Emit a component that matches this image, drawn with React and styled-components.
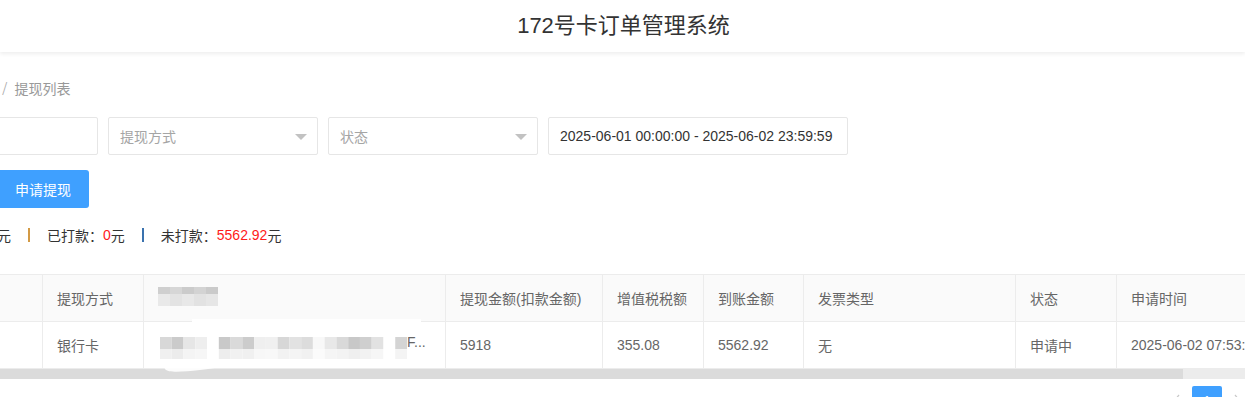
import React from "react";
import styled, { createGlobalStyle } from "styled-components";

const GlobalStyle = createGlobalStyle`
  html, body { margin: 0; padding: 0; background: #fff; overflow: hidden; }
  body {
    font-family: "Liberation Sans", "Noto Sans CJK SC", sans-serif;
    font-size: 14px;
    color: #333;
  }
  * { box-sizing: border-box; }
`;

const Page = styled.div`
  width: 1245px;
  height: 397px;
  overflow: hidden;
  position: relative;
`;

const Header = styled.header`
  height: 52px;
  display: flex;
  align-items: center;
  justify-content: center;
  background: #fff;
  box-shadow: 0 2px 4px rgba(0, 0, 0, 0.07);
  position: relative;
  z-index: 2;
`;

const Title = styled.h1`
  margin: 0;
  font-size: 22px;
  font-weight: normal;
  color: #333;
  line-height: 30px;
  padding-left: 2px;
`;

const Content = styled.main`
  padding-top: 27px;
`;

const Breadcrumb = styled.div`
  display: flex;
  align-items: center;
  height: 20px;
  line-height: 20px;
  margin-left: 2px;
  color: #999;
  font-size: 14px;
`;

const Slash = styled.span`
  margin-right: 7px;
  color: #aaa;
  font-size: 16px;
  font-family: "DejaVu Sans", sans-serif;
  font-weight: 300;
`;

const FilterRow = styled.div`
  display: flex;
  gap: 10px;
  margin-top: 18px;
`;

const Field = styled.div`
  width: ${(p) => p.$w || 210}px;
  height: 38px;
  border: 1px solid #e6e6e6;
  border-radius: 2px;
  display: flex;
  align-items: center;
  justify-content: space-between;
  padding: 0 10px 0 11px;
  font-size: 14px;
  color: ${(p) => (p.$filled ? "#333" : "#a5a5a5")};
  background: #fff;
  margin-left: ${(p) => p.$ml || 0}px;
  flex-shrink: 0;
`;

const Caret = styled.span`
  width: 0;
  height: 0;
  border-left: 6px solid transparent;
  border-right: 6px solid transparent;
  border-top: 6px solid #c2c2c2;
  margin-top: 2px;
`;

const ButtonRow = styled.div`
  display: flex;
  margin-top: 15px;
`;

const PrimaryButton = styled.button`
  height: 38px;
  margin-left: -3px;
  padding: 0 18px;
  border: none;
  border-radius: 3px;
  background: #3fa0ff;
  color: #fff;
  font-family: inherit;
  font-size: 14px;
  cursor: pointer;
`;

const Summary = styled.div`
  display: flex;
  align-items: center;
  height: 20px;
  margin-top: 17px;
  margin-left: -3px;
  font-size: 14px;
  color: #333;
  white-space: nowrap;
`;

const Sep = styled.span`
  display: inline-block;
  width: 2px;
  height: 14px;
  margin: 0 17px;
  background: ${(p) => p.$c};
`;

const Red = styled.span`
  color: #ff1a1a;
`;

const TableArea = styled.div`
  margin-top: 29px;
  position: relative;
`;

const GridRow = styled.div`
  display: grid;
  grid-template-columns: 103px 101px 302px 157px 101px 100px 212px 101px 220px;
  margin-left: -60px;
  width: max-content;
  background: ${(p) => (p.$head ? "#fafafa" : "#fff")};
  border-top: ${(p) => (p.$head ? "1px solid #ececec" : "none")};
`;

const Cell = styled.div`
  height: 47px;
  padding: 0 14px;
  display: flex;
  align-items: center;
  border-right: 1px solid #ececec;
  border-bottom: 1px solid #ececec;
  color: #666;
  font-size: 14px;
  white-space: nowrap;
  overflow: hidden;
  position: relative;
`;

const Scrollbar = styled.div`
  height: 10px;
  background: #ececec;
  display: flex;
`;

const Thumb = styled.div`
  width: 1183px;
  height: 100%;
  background: #dbdbdb;
`;

const Pager = styled.div`
  display: flex;
  justify-content: flex-end;
  margin-top: 7px;
  margin-right: -7px;
`;

const PageItem = styled.div`
  width: 30px;
  height: 30px;
  display: flex;
  align-items: center;
  justify-content: center;
  border-radius: 2px;
  background: ${(p) => (p.$active ? "#3fa0ff" : "transparent")};
  color: ${(p) => (p.$active ? "#fff" : "#ccc")};
  font-size: 14px;
`;

const Redact = styled.svg`
  display: block;
  flex-shrink: 0;
  margin-left: ${(p) => p.$ml || 0}px;
  margin-top: ${(p) => p.$mt || 0}px;
  position: relative;
  z-index: 2;
`;

const Smear = styled.svg`
  position: absolute;
  left: 0;
  top: 0;
  pointer-events: none;
  z-index: 1;
`;

const Tail = styled.span`
  margin-left: 0;
  margin-top: -6px;
  position: relative;
  z-index: 2;
`;

const headMosaic = [
  ["#cfcfcf", "#d6d6d6", "#cbcbcb", "#d3d3d3", "#cacaca"],
  ["#e9e9e9", "#e3e3e3", "#e8e8e8", "#e2e2e2", "#e6e6e6"],
];

const bodyTop = [
  "#d8d8d8", "#cbcbcb", "#e6e6e6", "#eeeeee", "#ffffff", "#c9c9c9", "#dadada",
  "#cccccc", "#efefef", "#f0f0f0", "#d7d7d7", "#e2e2e2", "#dcdcdc", "#f8f8f8",
  "#e8e8e8", "#d9d9d9", "#c8c8c8", "#cfcfcf", "#e2e2e2", "#ffffff", "#d4d4d4",
];
const bodyBottom = [
  "#f0f0f0", "#ececec", "#f4f4f4", "#f6f6f6", "#ffffff", "#ededed", "#f1f1f1",
  "#f0f0f0", "#f7f7f7", "#f8f8f8", "#f2f2f2", "#f4f4f4", "#f1f1f1", "#fbfbfb",
  "#f5f5f5", "#f3f3f3", "#efefef", "#f2f2f2", "#f6f6f6", "#ffffff", "#f4f4f4",
];

function Mosaic({ rows, size = 12, heights, width, ml, mt }) {
  const w = rows[0].length * size;
  const h = heights.reduce((a, b) => a + b, 0);
  let y = 0;
  return (
    <Redact
      width={width || w}
      height={h}
      viewBox={`0 0 ${w} ${h}`}
      preserveAspectRatio="none"
      $ml={ml}
      $mt={mt}
    >
      {rows.map((row, ri) => {
        const rh = heights[ri];
        const yy = y;
        y += rh;
        return row.map((c, ci) => (
          <rect key={`${ri}-${ci}`} x={ci * size} y={yy} width={size} height={rh} fill={c} />
        ));
      })}
    </Redact>
  );
}

const Chevron = ({ dir }) => (
  <svg width="12" height="14" viewBox="0 0 12 14">
    <polyline
      points={dir === "left" ? "8,1 3,7 8,13" : "4,1 9,7 4,13"}
      fill="none"
      stroke="#c8c8c8"
      strokeWidth="1.2"
    />
  </svg>
);

export default function App() {
  return (
    <Page>
      <GlobalStyle />
      <Header>
        <Title>172号卡订单管理系统</Title>
      </Header>
      <Content>
        <Breadcrumb>
          <Slash>/</Slash>
          <span>提现列表</span>
        </Breadcrumb>

        <FilterRow>
          <Field $ml={-112} />
          <Field>
            <span>提现方式</span>
            <Caret />
          </Field>
          <Field>
            <span>状态</span>
            <Caret />
          </Field>
          <Field $w={300} $filled>
            <span>2025-06-01 00:00:00 - 2025-06-02 23:59:59</span>
          </Field>
        </FilterRow>

        <ButtonRow>
          <PrimaryButton>申请提现</PrimaryButton>
        </ButtonRow>

        <Summary>
          <span>元</span>
          <Sep $c="#d39a45" />
          <span>已打款：</span>
          <Red>0</Red>
          <span>元</span>
          <Sep $c="#3a72ae" />
          <span>未打款：</span>
          <Red>5562.92</Red>
          <span>元</span>
        </Summary>

        <TableArea>
          <GridRow $head>
            <Cell />
            <Cell>提现方式</Cell>
            <Cell>
              <Mosaic rows={headMosaic} heights={[7, 12]} mt={-4} />
            </Cell>
            <Cell>提现金额(扣款金额)</Cell>
            <Cell>增值税税额</Cell>
            <Cell>到账金额</Cell>
            <Cell>发票类型</Cell>
            <Cell>状态</Cell>
            <Cell>申请时间</Cell>
          </GridRow>
          <GridRow>
            <Cell />
            <Cell>银行卡</Cell>
            <Cell>
              <Mosaic rows={[bodyTop, bodyBottom]} heights={[12, 10]} width={247} ml={2} mt={6} />
              <Tail>F...</Tail>
            </Cell>
            <Cell>5918</Cell>
            <Cell>355.08</Cell>
            <Cell>5562.92</Cell>
            <Cell>无</Cell>
            <Cell>申请中</Cell>
            <Cell>2025-06-02 07:53:12</Cell>
          </GridRow>
          <Scrollbar>
            <Thumb />
          </Scrollbar>
          <Smear width="460" height="110" viewBox="0 0 460 110">
            <path d="M192,45 L421,45 L421,51 L192,51 Z" fill="#ffffff" />
            <path
              d="M300,82 C270,86 230,92 200,96 C182,98 168,99 165,95 C162,90 172,86 190,84 C220,80 260,80 300,82 Z"
              fill="#ffffff"
              opacity="0.9"
            />
          </Smear>
          <Pager>
            <PageItem>
              <Chevron dir="left" />
            </PageItem>
            <PageItem $active>1</PageItem>
            <PageItem>
              <Chevron dir="right" />
            </PageItem>
          </Pager>
        </TableArea>
      </Content>
    </Page>
  );
}
